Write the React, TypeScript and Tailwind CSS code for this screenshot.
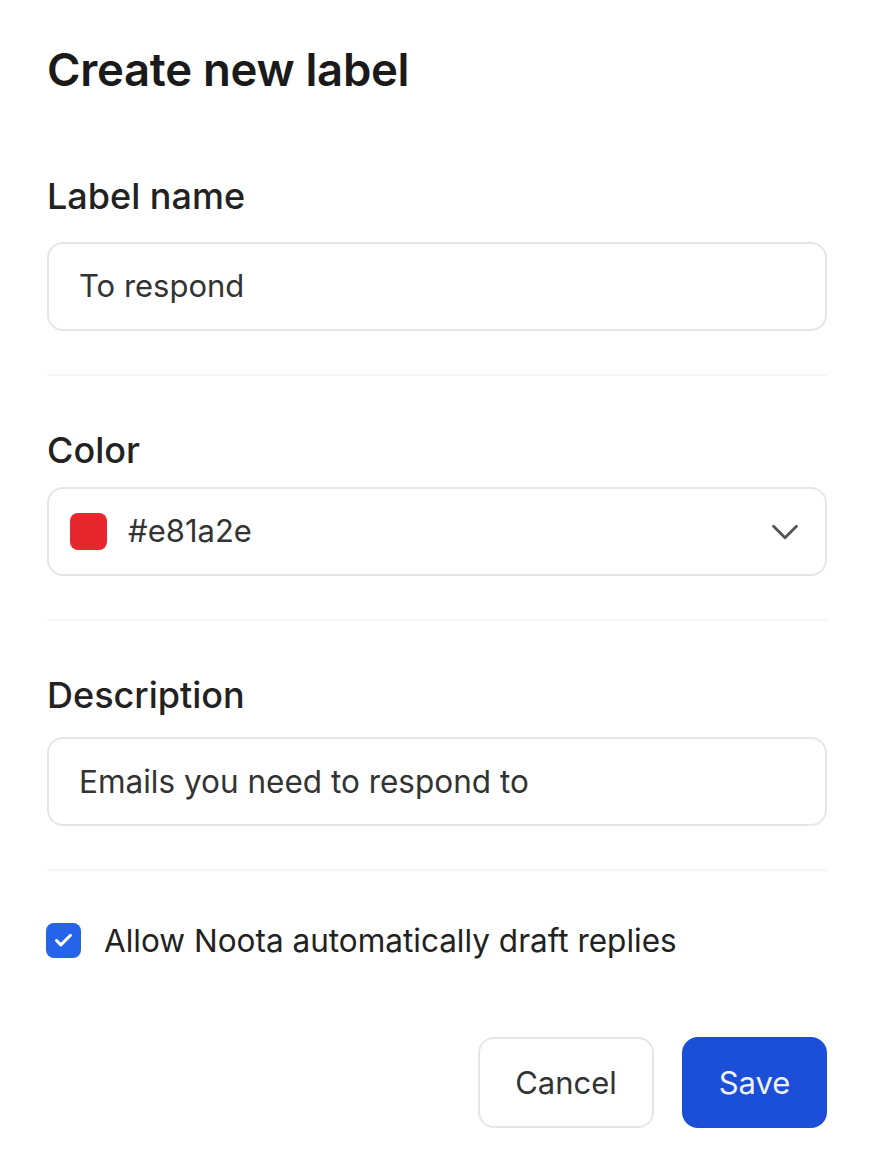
import { Check, ChevronDown } from 'lucide-react'

export default function App() {
  return (
    <div className="min-h-screen w-[876px] bg-white font-['Inter',sans-serif] text-[#1c1c1c]">
      <div className="pl-[47px] pr-[49px] pt-[42px]">
        <h1 className="text-[45.5px] font-semibold leading-[56px] tracking-[-0.3px] text-[#1a1a1a]">Create new label</h1>

        {/* Label name */}
        <div className="mt-[76px]">
          <label className="block text-[36px] font-medium leading-[44px] text-[#222]">Label name</label>
          <div className="mt-[24px] flex h-[89px] items-center rounded-[16px] border-2 border-[#e6e6e6] px-[30px] text-[31px] text-[#333]">
            To respond
          </div>
        </div>

        <div className="mt-[43px] h-[2px] bg-[#f6f6f6]" />

        {/* Color */}
        <div className="mt-[52px]">
          <label className="block text-[36px] font-medium leading-[44px] text-[#222]">Color</label>
          <div className="mt-[15px] flex h-[89px] items-center rounded-[16px] border-2 border-[#e6e6e6] pl-[21px] pr-[17px] text-[31px] text-[#333]">
            <span className="h-[37px] w-[37px] rounded-[8px] bg-[#e8262e]" />
            <span className="ml-[21px] flex-1">#e81a2e</span>
            <ChevronDown className="h-[46px] w-[46px] text-[#555]" strokeWidth={1.5} />
          </div>
        </div>

        <div className="mt-[43px] h-[2px] bg-[#f6f6f6]" />

        {/* Description */}
        <div className="mt-[52px]">
          <label className="block text-[36px] font-medium leading-[44px] text-[#222]">Description</label>
          <div className="mt-[20px] flex h-[89px] items-center rounded-[16px] border-2 border-[#e6e6e6] px-[30px] text-[31.5px] text-[#333]">
            Emails you need to respond to
          </div>
        </div>

        <div className="mt-[43px] h-[2px] bg-[#f6f6f6]" />

        <label className="mt-[46px] flex items-center gap-[23px]">
          <span className="-ml-px flex h-[35px] w-[35px] items-center justify-center rounded-[8px] bg-[#2563eb]">
            <Check className="h-[21px] w-[21px] text-white" strokeWidth={3.5} />
          </span>
          <span className="text-[31.5px] text-[#222]">Allow Noota automatically draft replies</span>
        </label>

        <div className="mt-[73px] flex justify-end gap-[28px]">
          <button className="h-[91px] w-[176px] rounded-[16px] border-2 border-[#e6e6e6] bg-white text-[31px] font-normal text-[#333]">
            Cancel
          </button>
          <button className="h-[91px] w-[145px] rounded-[16px] bg-[#1c4fd8] text-[31px] font-normal text-[#eef2ff]">
            Save
          </button>
        </div>
      </div>
    </div>
  )
}
